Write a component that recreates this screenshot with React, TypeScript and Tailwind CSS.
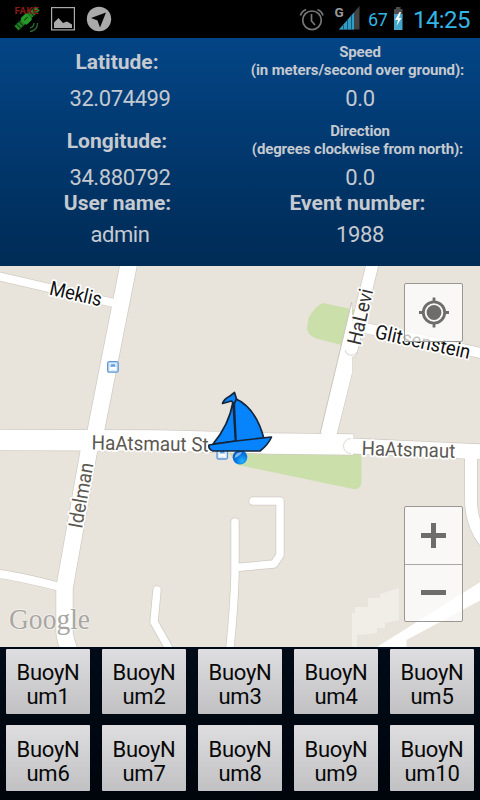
import React from "react";

const ROADS: { d: string; w: number; round?: boolean }[] = [
  { d: "M-5 275.500L118 304", w: 8 },
  { d: "M-5 573.500Q18 576 60 587", w: 8 },
  { d: "M-5 440L160 440.500L270 443.500L353 444.500", w: 20.5 },
  { d: "M129.500 260L94 440L89 450L64.500 588L64.500 632Q65 640 70 652", w: 16.5 },
  { d: "M157 590L154 622L171 652", w: 7.5, round: true },
  { d: "M235 522L235 575Q234 610 229.500 652", w: 7.5, round: true },
  { d: "M253 501L280 501L280 555L274 564L236 567.500", w: 7.5, round: true },
  { d: "M471 455L471 500Q471 526 488 546", w: 12 },
  { d: "M365 328L485 354", w: 10 },
  { d: "M373.500 260L351 351", w: 12, round: true },
  { d: "M351 446L485 452", w: 15, round: true },
];

function StreetMap() {
  return (
    <svg className="block h-full w-full" viewBox="0 266 480 381" fontFamily="Roboto, sans-serif">
      <rect y="266" width="480" height="381" fill="#e8e4dc" />
      <path d="M323 303L356 310L341 345L315 338Q307 334 307 328L308.500 318Q315 306 323 303Z" fill="#cbdfab" />
      <path d="M228 452H361.500V482Q361 490 353 489L238 465Z" fill="#cbdfab" />
      <path
        d="M352 613H355V607H368V598H380V594L399 588V620L385 623V628H377V633L370 634L357 635V647H352Z"
        fill="#f1eee8"
      />
      <path d="M375.500 648L481 581.500V600L406.500 640V648Z" fill="#fff" />
      <path d="M351.700 302V374L336.500 436H319.500Z" fill="#fff" stroke="#cbc6bd" strokeWidth="1" />
      <g fill="none" stroke="#cfcac2" strokeLinejoin="round">
        {ROADS.map((r) => (
          <path key={r.d} d={r.d} strokeWidth={r.w + 1.4} strokeLinecap={r.round ? "round" : "butt"} />
        ))}
      </g>
      <g fill="none" stroke="#fff" strokeLinejoin="round">
        {ROADS.map((r) => (
          <path key={r.d} d={r.d} strokeWidth={r.w} strokeLinecap={r.round ? "round" : "butt"} />
        ))}
      </g>
      <path d="M346 330L352 304V373L336 437H321Z" fill="#fff" />
      <path d="M345 350A6.500 6.500 0 0 0 357 352" fill="none" stroke="#d8d4cc" />
      <path d="M351 438.500A7.500 7.500 0 0 0 351 453.500" fill="none" stroke="#dedbd5" />
      {[
        [107.2, 361.2],
        [216.500, 448],
      ].map(([x, y]) => (
        <g key={x} transform={`translate(${x} ${y})`}>
          <rect x=".5" y=".5" width="10.500" height="10.500" rx="1.500" fill="#d3e6fb" stroke="#5f97d4" strokeWidth="1.300" />
          <path d="M2.500 9.500V6L3.500 3H8L9 6V9.500H7.500V8.500H4V9.500Z" fill="#fff" />
          <path d="M3 5.500L4 3H7.500L8.500 5.500Z" fill="#5b9be0" />
        </g>
      ))}
      <g fontSize="20" stroke="#fff" strokeWidth="3.500" strokeLinejoin="round" paintOrder="stroke">
        <text transform="translate(48.500 294.500) rotate(13)" textLength="53" lengthAdjust="spacingAndGlyphs" fill="#111">Meklis</text>
        <text transform="translate(91.500 449.500) rotate(1)" textLength="117" lengthAdjust="spacingAndGlyphs" fill="#5c5852">HaAtsmaut St</text>
        <text transform="translate(361.500 455) rotate(1.800)" textLength="93.500" lengthAdjust="spacingAndGlyphs" fill="#5c5852">HaAtsmaut</text>
        <text transform="translate(82 529) rotate(-80)" textLength="66" lengthAdjust="spacingAndGlyphs" fill="#5c5852">Idelman</text>
        <text transform="translate(360.500 346) rotate(-77)" textLength="57" lengthAdjust="spacingAndGlyphs" fill="#333">HaLevi</text>
        <text transform="translate(374 338) rotate(12.500)" textLength="97" lengthAdjust="spacingAndGlyphs" fill="#111">Glitsenstein</text>
      </g>
      <text x="9" y="629" fontSize="28.500" fontFamily="'Liberation Serif', serif" textLength="81" lengthAdjust="spacingAndGlyphs" fill="#a9a6a2" stroke="#fff" strokeWidth="1.500" strokeOpacity=".6" paintOrder="stroke">Google</text>
      <defs>
        <radialGradient id="dot" cx=".65" cy=".75" r=".8">
          <stop offset="0" stopColor="#21b5ff" />
          <stop offset=".5" stopColor="#087ae8" />
          <stop offset="1" stopColor="#0751bd" />
        </radialGradient>
      </defs>
      <circle cx="240" cy="457.300" r="7.300" fill="url(#dot)" />
      <path d="M234.500 458Q235 452 242 452Q240 456 234.500 458Z" fill="#9cc8f8" opacity=".8" />
      <g fill="#0784fc" stroke="#16263a" strokeWidth="1.700" strokeLinejoin="round">
        <path d="M233 402L235.500 441L213 444Q229 425 233 402Z" />
        <path d="M234 398Q256 407 264 439L236 441.500Z" />
        <path d="M209 445L236 441L271.500 437Q268 445 260 451H213Q208 449 209 445Z" />
        <path d="M222.500 403.500Q224 399 230 396L234.500 392.500L236.500 399L234 404L231.500 401Z" />
      </g>
    </svg>
  );
}

function StatusBar() {
  return (
    <header className="flex h-[38px] shrink-0 items-center justify-between bg-black">
      <svg className="ml-3 h-[38px] w-[102px]" viewBox="12 0 102 38">
        <g transform="rotate(-43 27 19)">
          <rect x="13" y="15.500" width="10" height="6" fill="#237e25" />
          <rect x="22" y="14" width="9" height="9" rx="2" fill="#269a28" />
          <rect x="31" y="15.500" width="11" height="6" fill="#237e25" />
          <path d="M16 15V22M19.500 15V22M34 15V22M38 15V22M24 18H29" stroke="#0b3e12" />
        </g>
        <text x="14.500" y="14" fontSize="8.500" fontFamily="Roboto, sans-serif" fontWeight="700" textLength="24" lengthAdjust="spacingAndGlyphs" fill="#861a16">FAKE</text>
        <path d="M30 28Q34 27 34 23M30 31.500Q37.500 30.500 37.500 23" stroke="#2a6c31" strokeWidth="1.300" fill="none" />
        <rect x="51.600" y="7.600" width="22.800" height="22.300" fill="none" stroke="#aaa" strokeWidth="1.200" />
        <path d="M54 28V22.500L58.500 18L63 23L67 21.500L72 24.500V28Z" fill="#aaa" />
        <circle cx="99" cy="19" r="12.200" fill="#aaa" />
        <path d="M91 18L106 12.500L100 27.500L97.500 20.500Z" fill="#050505" />
      </svg>
      <div className="flex items-center font-[Roboto,sans-serif] text-[#33b5e5]">
        <svg className="h-[38px] w-[63px]" viewBox="299 0 63 38">
          <g fill="none" stroke="#777" strokeWidth="1.700">
            <circle cx="313" cy="20.300" r="9.300" />
            <path d="M312.500 14V21L316 25" />
            <path d="M301.500 15.500Q302.500 11.500 307 9.500M318.500 9.500Q323 11.500 324 15.500" />
          </g>
          <text x="335.500" y="17" fontSize="13.500" fontWeight="700" fontFamily="Roboto, sans-serif" fill="#999">G</text>
          <path d="M360.500 6V29.500H340Z" fill="#424242" />
          <path d="M355 12.500V29.500H340Z" fill="#309dc4" />
          <path d="M344.500 25V30M348.500 20V30M352.500 15V30" stroke="#145b78" />
        </svg>
        <span className="ml-[7px] w-5 pt-px text-[18px] leading-[38px] tracking-[-0.4px]">67</span>
        <svg className="ml-[6px] h-[38px] w-[9px]" viewBox="395 0 9 38">
          <path d="M395 9H397V7H401.500V9H403.500V18H395Z" fill="#4d4d4d" />
          <path d="M395 14H403.500V30H395Z" fill="#42a7cb" />
          <path d="M400.500 12L396 20H399L397.500 26L402.500 18H400L402 12Z" fill="#fff" />
        </svg>
        <time className="ml-[10px] w-[67px] pt-px text-[24px] leading-[38px] tracking-[-0.6px]">14:25</time>
      </div>
    </header>
  );
}

function Reading({ value }: { value: string }) {
  return <div className="text-center text-[22px] leading-[26px] tracking-[-0.4px]">{value}</div>;
}

function Telemetry() {
  return (
    <section className="grid h-[228px] shrink-0 grid-cols-2 bg-linear-to-b from-[#044586] to-[#002b56] font-[Roboto,sans-serif] text-[#c5c9d0]">
      <div className="pt-[11px]">
        <h2 className="pr-[6px] text-center text-[21px] leading-[26px] font-bold">Latitude:</h2>
        <div className="mt-[11px]"><Reading value="32.074499" /></div>
        <h2 className="mt-4 pr-[6px] text-center text-[21px] leading-[26px] font-bold">Longitude:</h2>
        <div className="mt-[11px]"><Reading value="34.880792" /></div>
        <h2 className="-mt-px pr-[5px] text-center text-[21px] leading-[26px] font-bold">User name:</h2>
        <div className="mt-[6px]"><Reading value="admin" /></div>
      </div>
      <div className="pt-[5px]">
        <h2 className="text-center text-[15px] leading-[18px] font-bold tracking-[-0.13px] whitespace-nowrap">
          Speed
          <span className="block pr-[5px]">(in meters/second over ground):</span>
        </h2>
        <div className="mt-[7px]"><Reading value="0.0" /></div>
        <h2 className="mt-[10px] text-center text-[15px] leading-[18px] font-bold tracking-[-0.13px] whitespace-nowrap">
          Direction
          <span className="block pr-[5px]">(degrees clockwise from north):</span>
        </h2>
        <div className="mt-[7px]"><Reading value="0.0" /></div>
        <h2 className="-mt-px pr-[5px] text-center text-[21px] leading-[26px] font-bold">Event number:</h2>
        <div className="mt-[6px]"><Reading value="1988" /></div>
      </div>
    </section>
  );
}

function MapPanel() {
  return (
    <main className="relative h-[381px] shrink-0 overflow-hidden">
      <StreetMap />
      <button className="absolute top-[17px] left-[404px] flex h-[59px] w-[59px] items-center justify-center rounded-[2px] border border-[#999793] bg-white/75">
        <svg className="h-8 w-8" viewBox="0 0 32 32">
          <circle cx="16" cy="15.500" r="10.700" fill="none" stroke="#6f6d6b" strokeWidth="2.800" />
          <circle cx="16" cy="15.500" r="7.400" fill="#6f6d6b" />
          <path d="M16 .5V5.500M16 25.500V30.500M1 15.500H6M26 15.500H31" stroke="#6f6d6b" strokeWidth="2.800" />
        </svg>
      </button>
      <div className="absolute top-[240px] left-[404px] flex h-[116px] w-[59px] flex-col rounded-[2px] border border-[#999793] bg-white/75">
        <button className="flex flex-1 items-center justify-center border-b border-[#aaa8a5]">
          <svg className="h-[25px] w-[25px]" viewBox="0 0 25 25">
            <path d="M0 12.500H25M12.500 0V25" stroke="#6f6d6b" strokeWidth="5" />
          </svg>
        </button>
        <button className="flex flex-1 items-center justify-center">
          <svg className="h-[5px] w-[25px]" viewBox="0 0 25 5">
            <path d="M0 2.500H25" stroke="#6f6d6b" strokeWidth="5" />
          </svg>
        </button>
      </div>
    </main>
  );
}

export default function App() {
  return (
    <div className="flex h-[800px] w-[480px] flex-col overflow-hidden bg-black">
      <StatusBar />
      <Telemetry />
      <MapPanel />
      <footer className="grid flex-1 grid-cols-5 grid-rows-[65px_66px] content-start gap-x-3 gap-y-[11px] bg-linear-to-b from-[#000b17] to-[#00050c] px-[6px] pt-[2px]">
        {[1, 2, 3, 4, 5, 6, 7, 8, 9, 10].map((n) => (
          <button
            key={n}
            className="rounded-[1px] bg-linear-to-b from-[#dedee0] to-[#c1c1c4] pt-[7px] text-center font-[Roboto,sans-serif] text-[22px] leading-6 tracking-[-0.3px] text-[#080808]"
          >
            BuoyN
            <br />
            um{n}
          </button>
        ))}
      </footer>
    </div>
  );
}
